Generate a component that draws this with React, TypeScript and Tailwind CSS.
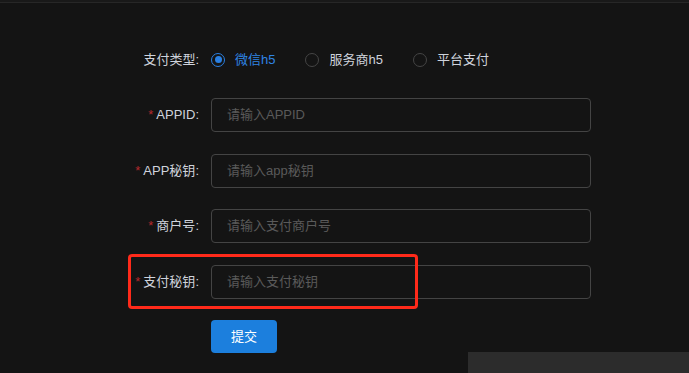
const font = { fontFamily: '"Liberation Sans", "Noto Sans CJK SC", sans-serif' };

function Radio({ label, checked }: { label: string; checked?: boolean }) {
  return (
    <div className="flex items-center mr-[30px]">
      <span
        className={
          checked
            ? "w-[14px] h-[14px] rounded-full border border-[#2a80e2] flex items-center justify-center"
            : "w-[14px] h-[14px] rounded-full border border-[#454545]"
        }
      >
        {checked && <span className="w-[7px] h-[7px] rounded-full bg-[#2a80e2]" />}
      </span>
      <span className={checked ? "ml-[10px] text-[#2f84e4]" : "ml-[10px] text-[#cfd3dc]"}>{label}</span>
    </div>
  );
}

function Field({ label, placeholder }: { label: string; placeholder: string }) {
  return (
    <div className="flex items-center h-[34px] mb-[21.5px]">
      <label className="w-[112px] pr-[12px] text-right text-[#cfd3dc]">
        <span className="text-[#b3292d] mr-[3px]">*</span>
        {label}:
      </label>
      <div className="w-[380px] h-[34px] border border-[#444] rounded-[4px] flex items-center pl-[15px] text-[#5a5a5a]">
        {placeholder}
      </div>
    </div>
  );
}

export default function App() {
  return (
    <div className="relative w-[689px] h-[373px] bg-[#141414] overflow-hidden text-[13px]" style={font}>
      <div className="h-[3px] bg-[#191919] border-b border-[#272727]" />
      <div className="pl-[99px] pt-[39.5px]">
        <div className="flex items-center h-[34px] mb-[21.5px]">
          <label className="w-[112px] pr-[12px] text-right text-[#cfd3dc]">支付类型:</label>
          <Radio label="微信h5" checked />
          <Radio label="服务商h5" />
          <Radio label="平台支付" />
        </div>
        <Field label="APPID" placeholder="请输入APPID" />
        <Field label="APP秘钥" placeholder="请输入app秘钥" />
        <Field label="商户号" placeholder="请输入支付商户号" />
        <Field label="支付秘钥" placeholder="请输入支付秘钥" />
        <div className="pl-[112px]">
          <button className="w-[66px] h-[33px] rounded-[4px] bg-[#1c7fdd] text-white text-[13px]">提交</button>
        </div>
      </div>
      <div className="absolute left-[128px] top-[254px] w-[290px] h-[55px] border-[3px] border-[#ff2a1a] rounded-[4px]" />
      <div className="absolute left-[468px] top-[352px] right-0 bottom-0 bg-[#2c2c2c]" />
    </div>
  );
}
